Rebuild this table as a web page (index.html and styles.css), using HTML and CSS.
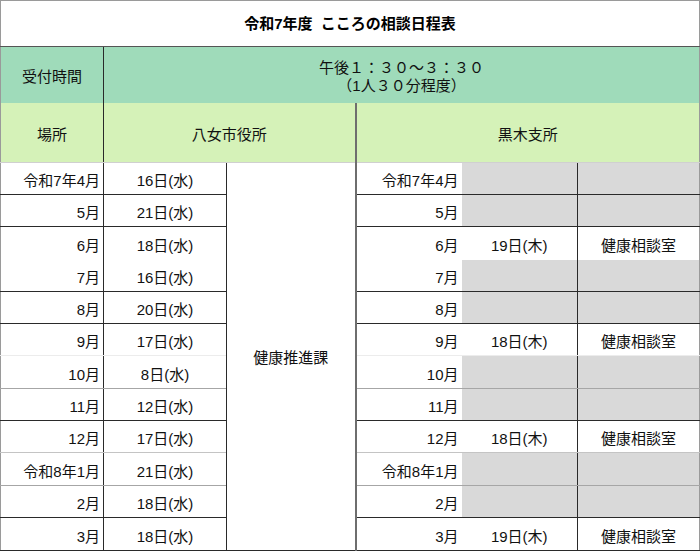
FILE: index.html
```html
<!DOCTYPE html>
<html lang="ja">
<head>
<meta charset="utf-8">
<title>令和7年度 こころの相談日程表</title>
<link rel="stylesheet" href="styles.css">
</head>
<body>
<table class="sched">
  <colgroup>
    <col class="c-a"><col class="c-b"><col class="c-c"><col class="c-d"><col class="c-e"><col class="c-f">
  </colgroup>
  <tr class="r-title">
    <td colspan="6" class="title">令和7年度&nbsp;&nbsp;こころの相談日程表</td>
  </tr>
  <tr class="r-time">
    <td class="head">受付時間</td>
    <td colspan="5" class="head time">午後１：３０～３：３０<br>（1人３０分程度）</td>
  </tr>
  <tr class="r-place">
    <td class="head">場所</td>
    <td colspan="2" class="head">八女市役所</td>
    <td colspan="3" class="head kuroki">黒木支所</td>
  </tr>
  <tr class="r-data b-dark">
    <td class="mon">令和7年4月</td><td class="date">16日(水)</td>
    <td rowspan="12" class="dept">健康推進課</td>
    <td class="mon mon-r">令和7年4月</td><td class="gray"></td><td class="gray last"></td>
  </tr>
  <tr class="r-data b-dark">
    <td class="mon">5月</td><td class="date">21日(水)</td>
    <td class="mon mon-r">5月</td><td class="gray"></td><td class="gray last"></td>
  </tr>
  <tr class="r-data tall b-none">
    <td class="mon">6月</td><td class="date">18日(水)</td>
    <td class="mon mon-r">6月</td><td class="date">19日(木)</td><td class="date last">健康相談室</td>
  </tr>
  <tr class="r-data b-dark">
    <td class="mon">7月</td><td class="date">16日(水)</td>
    <td class="mon mon-r">7月</td><td class="gray"></td><td class="gray last"></td>
  </tr>
  <tr class="r-data b-dark">
    <td class="mon">8月</td><td class="date">20日(水)</td>
    <td class="mon mon-r">8月</td><td class="gray"></td><td class="gray last"></td>
  </tr>
  <tr class="r-data b-faint">
    <td class="mon">9月</td><td class="date">17日(水)</td>
    <td class="mon mon-r">9月</td><td class="date">18日(木)</td><td class="date last">健康相談室</td>
  </tr>
  <tr class="r-data tall b-mid">
    <td class="mon">10月</td><td class="date">8日(水)</td>
    <td class="mon mon-r">10月</td><td class="gray"></td><td class="gray last"></td>
  </tr>
  <tr class="r-data b-dark">
    <td class="mon">11月</td><td class="date">12日(水)</td>
    <td class="mon mon-r">11月</td><td class="gray"></td><td class="gray last"></td>
  </tr>
  <tr class="r-data b-light">
    <td class="mon">12月</td><td class="date">17日(水)</td>
    <td class="mon mon-r">12月</td><td class="date">18日(木)</td><td class="date last">健康相談室</td>
  </tr>
  <tr class="r-data tall b-mid">
    <td class="mon">令和8年1月</td><td class="date">21日(水)</td>
    <td class="mon mon-r">令和8年1月</td><td class="gray"></td><td class="gray last"></td>
  </tr>
  <tr class="r-data b-dark">
    <td class="mon">2月</td><td class="date">18日(水)</td>
    <td class="mon mon-r">2月</td><td class="gray"></td><td class="gray last"></td>
  </tr>
  <tr class="r-data tall b-dark">
    <td class="mon">3月</td><td class="date">18日(水)</td>
    <td class="mon mon-r">3月</td><td class="date">19日(木)</td><td class="date last">健康相談室</td>
  </tr>
</table>
</body>
</html>
```
FILE: styles.css
```css
html, body {
  margin: 0;
  padding: 0;
  background: #ffffff;
}

.sched {
  border-collapse: collapse;
  table-layout: fixed;
  width: 700px;
  font-family: "Liberation Sans", "Noto Sans CJK JP", sans-serif;
  font-size: 15px;
  color: #111;
  border-top: 1px solid #9a9a9a;
  border-left: 1px solid #9a9a9a;
  border-right: 1px solid #9a9a9a;
}

.c-a { width: 103px; }
.c-b { width: 123px; }
.c-c { width: 129px; }
.c-d { width: 106px; }
.c-e { width: 116px; }
.c-f { width: 122px; }

.sched td {
  padding: 0;
  line-height: 18px;
  white-space: nowrap;
}

.r-title { height: 46px; }
.r-title td {
  text-align: center;
  font-weight: bold;
  color: #000;
  border-bottom: 1px solid #555;
  padding-top: 1px;
}

.r-time { height: 56px; }
.r-time td {
  background: #9fdbba;
  text-align: center;
  padding-top: 5px;
}
.r-time td:first-child {
  border-right: 1px solid #2a2a2a;
}
.time {
  line-height: 19px;
}

.r-place { height: 60px; }
.r-place td {
  background: #d5f2b8;
  text-align: center;
  padding-top: 5px;
  border-bottom: 1px solid #d0d0d0;
}
.r-place td:first-child {
  border-right: 1px solid #2a2a2a;
}
.r-place .kuroki {
  border-left: 2px solid #6e6e6e;
}

.r-data { height: 32px; }
.r-data.tall { height: 33px; }
.r-data td {
  vertical-align: middle;
  padding-top: 5px;
}

.mon {
  text-align: right;
  padding-right: 3px !important;
  border-right: 1px solid #2a2a2a;
}
.mon-r {
  border-left: 2px solid #6e6e6e;
  border-right: none !important;
}
.date {
  text-align: center;
}
.r-data td:nth-child(2) {
  border-right: 1px solid #2a2a2a;
}
.gray {
  background: #d9d9d9;
}
.last {
  border-left: 1px solid #2a2a2a;
}
.dept {
  text-align: center;
  padding-top: 2px !important;
  border-left: 1px solid #2a2a2a;
  border-right: 2px solid #6e6e6e;
}

.b-dark td { border-bottom: 1px solid #2a2a2a; }
.b-none td { border-bottom: none; }
.b-faint td { border-bottom: 1px solid #ececec; }
.b-mid td { border-bottom: 1px solid #a6a6a6; }
.b-light td { border-bottom: 1px solid #c4c4c4; }
.dept { border-bottom: 1px solid #2a2a2a !important; }
```
